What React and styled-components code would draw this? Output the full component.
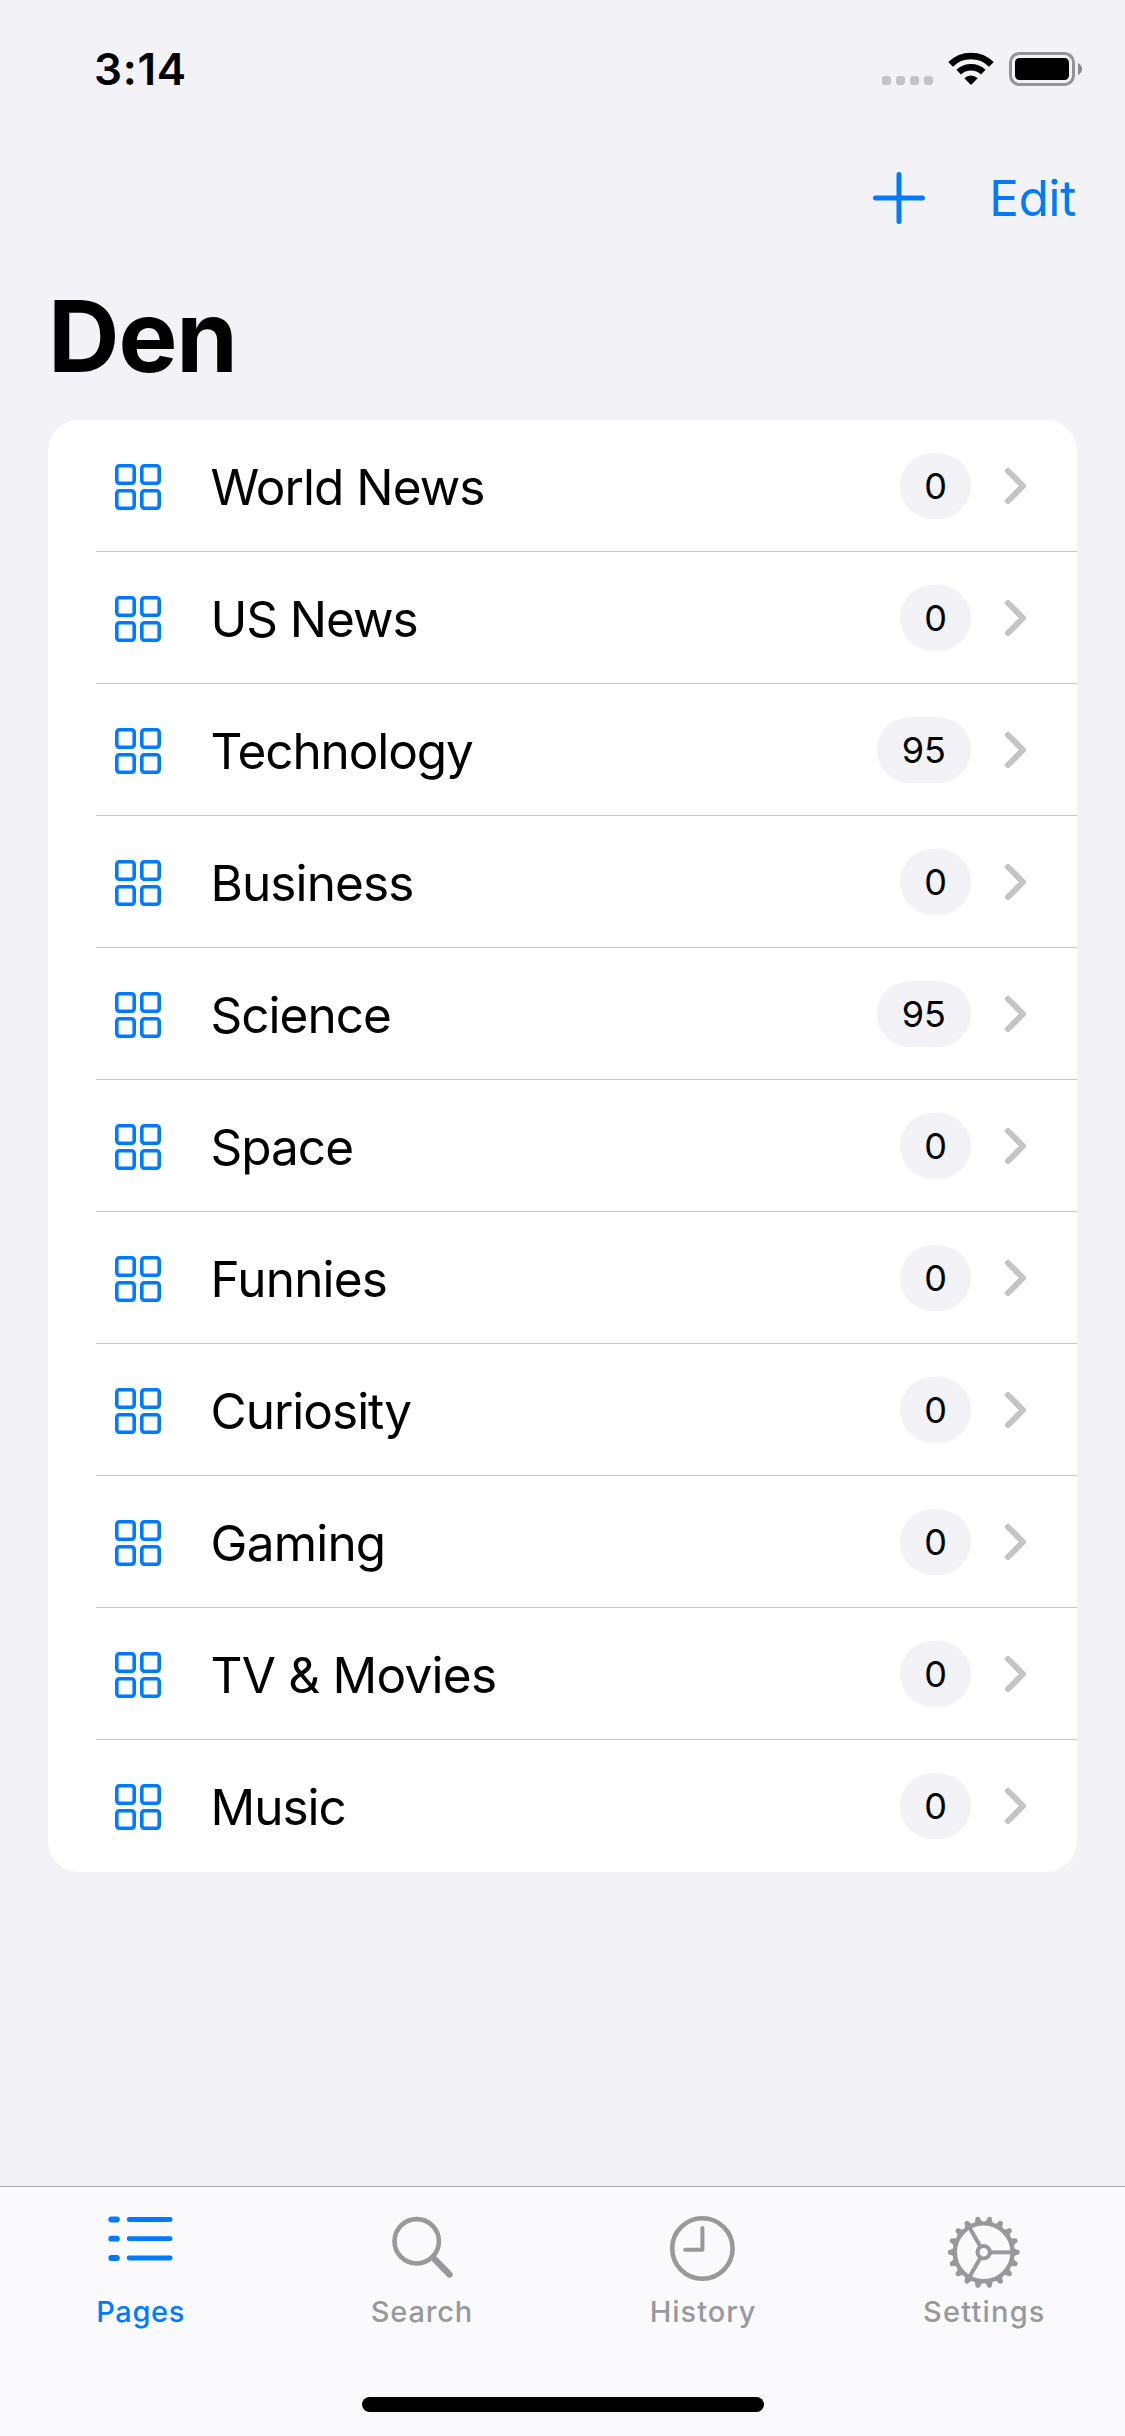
import React from "react";
import styled, { createGlobalStyle } from "styled-components";

const BLUE = "#007aff";
const GRAY = "#98989d";
const BG = "#f2f2f7";

const Global = createGlobalStyle`
  html, body { margin: 0; background: ${BG}; }
  * { box-sizing: border-box; }
`;

const Screen = styled.div`
  width: 1125px;
  height: 2436px;
  display: flex;
  flex-direction: column;
  background: ${BG};
  color: #000;
  font-family: Inter, "Liberation Sans", sans-serif;
  overflow: hidden;
`;

const StatusBar = styled.header`
  height: 132px;
  flex: none;
  display: flex;
  justify-content: space-between;
  padding: 0 43px 0 94px;
`;

const Clock = styled.div`
  font-size: 44px;
  font-weight: 600;
  line-height: 60px;
  padding-top: 39px;
  letter-spacing: 0.7px;
`;

const StatusIcons = styled.div`
  display: flex;
  align-items: flex-start;
  padding-top: 52px;
`;

const Cellular = styled.div`
  display: flex;
  gap: 5px;
  margin: 24px 15px 0 0;
`;

const CellDot = styled.i`
  width: 9px;
  height: 9px;
  border-radius: 3px;
  background: #c3c2c8;
`;

const Icon = styled.svg`
  display: block;
  flex: none;
  overflow: visible;
`;

const WifiIcon = styled(Icon)`
  margin-right: 15px;
`;

const NavBar = styled.nav`
  height: 132px;
  flex: none;
  display: flex;
  justify-content: flex-end;
  align-items: center;
  gap: 64px;
  padding-right: 49px;
`;

const EditButton = styled.button`
  all: unset;
  color: ${BLUE};
  font-size: 49.5px;
  line-height: 66px;
  letter-spacing: -0.4px;
`;

const Title = styled.h1`
  margin: 0;
  height: 156px;
  flex: none;
  padding: 12px 0 0 48px;
  font-size: 99px;
  font-weight: 700;
  line-height: 120px;
  letter-spacing: -1.1px;
`;

const List = styled.ul`
  list-style: none;
  margin: 0 48px;
  padding: 0 0 0 48px;
  background: #fff;
  border-radius: 31px;
`;

const Row = styled.li`
  height: 132px;
  display: flex;
  align-items: center;
  padding: 0 51px 0 19px;
  border-bottom: 1px solid #c6c6c8;
  &:last-child { border-bottom-color: transparent; }
`;

const RowIcon = styled(Icon)`
  margin-top: 2px;
`;

const RowLabel = styled.span`
  flex: 1;
  margin-left: 49.5px;
  padding-top: 2px;
  font-size: 49.5px;
  line-height: 66px;
  letter-spacing: ${(p) => p.$track}px;
`;

const Badge = styled.span`
  min-width: 71px;
  height: 66px;
  padding: 0 ${(p) => (p.$wide ? 25 : 20)}px;
  margin-right: 34px;
  border-radius: 33px;
  background: ${BG};
  font-size: 36px;
  line-height: 66px;
  text-align: center;
`;

const TabBar = styled.footer`
  margin-top: auto;
  height: 250px;
  flex: none;
  display: flex;
  flex-direction: column;
  align-items: center;
  background: #fafafd;
  border-top: 1px solid #a8a7ac;
`;

const Tabs = styled.div`
  width: 100%;
  height: 210px;
  display: grid;
  grid-template-columns: repeat(4, 1fr);
`;

const Tab = styled.div`
  display: flex;
  flex-direction: column;
  align-items: center;
  padding-top: 21px;
  color: ${(p) => (p.$active ? BLUE : GRAY)};
`;

const TabLabel = styled.span`
  font-size: 29px;
  font-weight: 500;
  line-height: 40px;
  letter-spacing: ${(p) => p.$track}px;
`;

const HomeIndicator = styled.div`
  width: 402px;
  height: 15px;
  border-radius: 8px;
  background: #000;
`;

const Wifi = () => (
  <WifiIcon width="46" height="33" viewBox="0 0 46 33">
    <g fill="none" stroke="#000" strokeWidth="6.6">
      <path d="M2.6 12.4A29 29 0 0 1 43.4 12.4" />
      <path d="M10.7 20.2A17.8 17.8 0 0 1 35.3 20.2" />
    </g>
    <path d="M16.3 26.2A9.6 9.6 0 0 1 29.7 26.2L23 33Z" />
  </WifiIcon>
);

const Battery = () => (
  <Icon width="73" height="34" viewBox="0 0 73 34">
    <rect x="1.5" y="1.5" width="63" height="31" rx="9" fill="none" stroke="#949398" strokeWidth="3" />
    <rect x="6" y="6" width="54" height="22" rx="4.5" />
    <path d="M69 11V23C71.5 22 73 19.6 73 17S71.5 12 69 11Z" fill="#8b8a8f" />
  </Icon>
);

const Plus = () => (
  <Icon width="52" height="52" viewBox="0 0 52 52">
    <path d="M26 2.5V49.5M2.5 26H49.5" stroke={BLUE} strokeWidth="5" strokeLinecap="round" />
  </Icon>
);

const GridIcon = () => (
  <RowIcon width="46" height="46" viewBox="0 0 46 46" fill="none" stroke={BLUE} strokeWidth="3.6">
    {[1.8, 26.8].map((y) =>
      [1.8, 26.8].map((x) => <rect key={x + "-" + y} x={x} y={y} width="17.4" height="17.4" rx="2.6" />)
    )}
  </RowIcon>
);

const Chevron = () => (
  <Icon width="21" height="36" viewBox="0 0 21 36">
    <path d="M3 3L18 18L3 33" fill="none" stroke="#c4c4c7" strokeWidth="6" strokeLinecap="round" strokeLinejoin="round" />
  </Icon>
);

const TabIcon = ({ children }) => (
  <Icon width="80" height="84" viewBox="0 0 80 84" fill="none" stroke="currentColor">
    {children}
  </Icon>
);

const PagesIcon = () => (
  <TabIcon>
    {[11.5, 30.7, 50].map((y) => (
      <g key={y} strokeLinecap="round">
        <path d={`M10.3 ${y}H15.9`} strokeWidth="5.8" />
        <path d={`M28.2 ${y}H69.2`} strokeWidth="4.8" />
      </g>
    ))}
  </TabIcon>
);

const SearchIcon = () => (
  <TabIcon>
    <circle cx="34.7" cy="33.3" r="22.2" strokeWidth="4.6" />
    <path d="M51 49.6L67.5 66.5" strokeWidth="6.4" strokeLinecap="round" />
  </TabIcon>
);

const HistoryIcon = () => (
  <TabIcon>
    <circle cx="39.4" cy="40.5" r="30.2" strokeWidth="4.6" />
    <path d="M39.4 20V41.8H22.2" strokeWidth="4" strokeLinecap="round" strokeLinejoin="round" />
  </TabIcon>
);

const SettingsIcon = () => (
  <TabIcon>
    <g transform="translate(39.7 44.3)">
      <circle r="28.9" strokeWidth="4.4" />
      <circle r="6.2" strokeWidth="4" />
      {[0, 120, 240].map((a) => (
        <path key={a} d="M7 0H28" strokeWidth="4" transform={`rotate(${a})`} />
      ))}
      {Array.from({ length: 18 }, (_, i) => (
        <path
          key={i}
          d="M29.5 -4.6L31.5 -3.2L35.3 -2Q36.7 0 35.3 2L31.5 3.2L29.5 4.6Z"
          fill="currentColor"
          stroke="none"
          transform={`rotate(${i * 20})`}
        />
      ))}
    </g>
  </TabIcon>
);

const pages = [
  ["World News", 0, -0.95],
  ["US News", 0, -1.05],
  ["Technology", 95, -1.1],
  ["Business", 0, -0.9],
  ["Science", 95, -1],
  ["Space", 0, -1],
  ["Funnies", 0, -0.8],
  ["Curiosity", 0, -1],
  ["Gaming", 0, -0.8],
  ["TV & Movies", 0, -0.75],
  ["Music", 0, -1],
];

const tabs = [
  ["Pages", PagesIcon, 0.65],
  ["Search", SearchIcon, 0.8],
  ["History", HistoryIcon, 0.95],
  ["Settings", SettingsIcon, 1.2],
];

export default function App() {
  return (
    <Screen>
      <Global />
      <StatusBar>
        <Clock>3:14</Clock>
        <StatusIcons>
          <Cellular>
            <CellDot /><CellDot /><CellDot /><CellDot />
          </Cellular>
          <Wifi />
          <Battery />
        </StatusIcons>
      </StatusBar>
      <NavBar>
        <Plus />
        <EditButton>Edit</EditButton>
      </NavBar>
      <Title>Den</Title>
      <List>
        {pages.map(([name, count, track]) => (
          <Row key={name}>
            <GridIcon />
            <RowLabel $track={track}>{name}</RowLabel>
            <Badge $wide={count > 9}>{count}</Badge>
            <Chevron />
          </Row>
        ))}
      </List>
      <TabBar>
        <Tabs>
          {tabs.map(([name, Glyph, track], i) => (
            <Tab key={name} $active={i === 0}>
              <Glyph />
              <TabLabel $track={track}>{name}</TabLabel>
            </Tab>
          ))}
        </Tabs>
        <HomeIndicator />
      </TabBar>
    </Screen>
  );
}
